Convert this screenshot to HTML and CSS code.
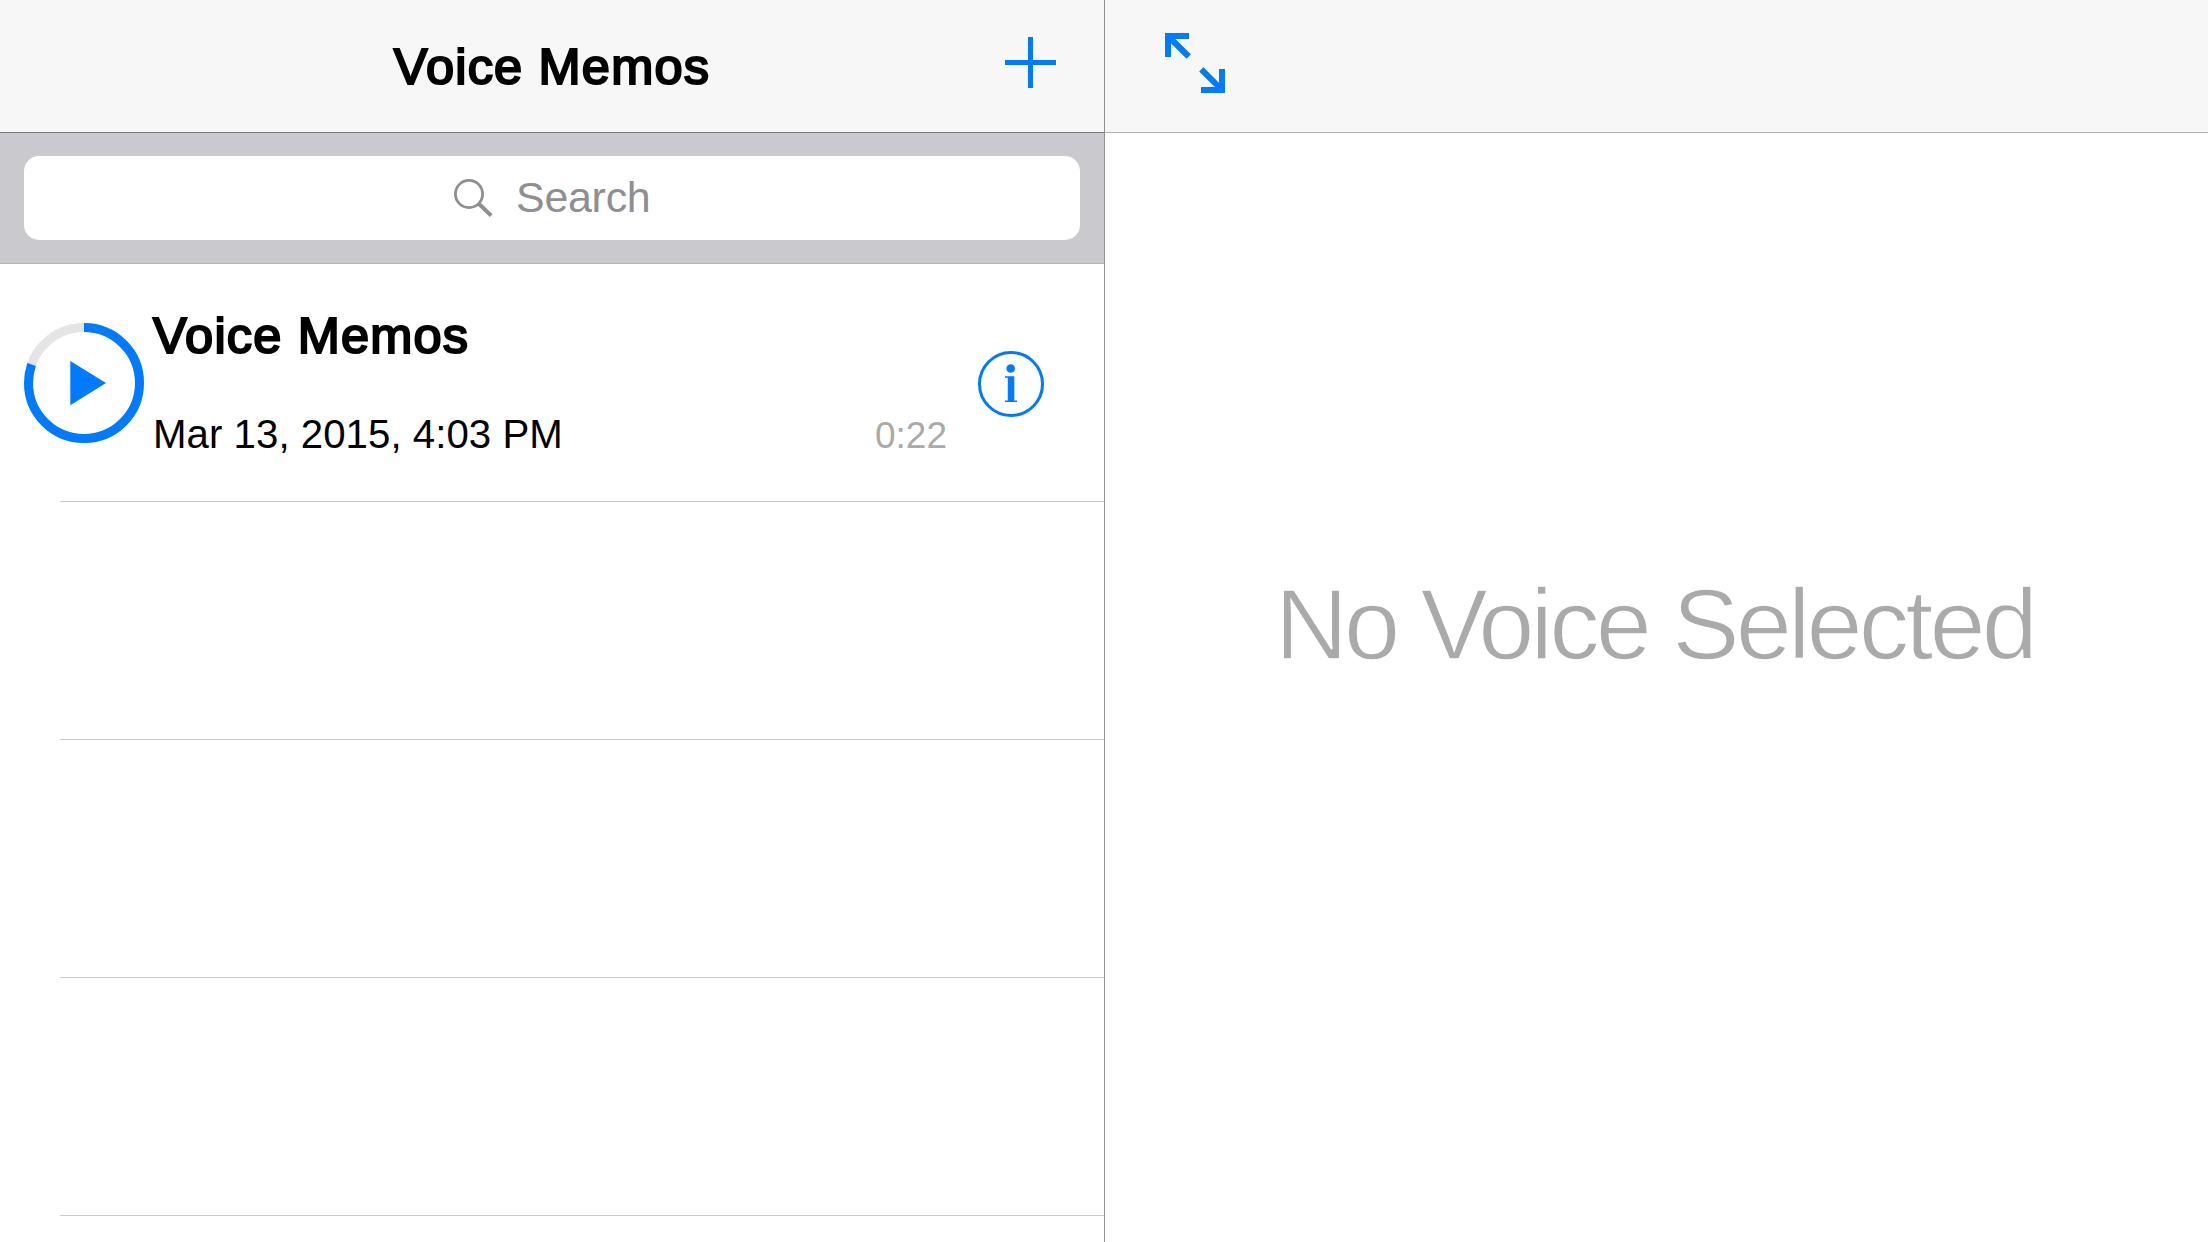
FILE: index.html
```html
<!DOCTYPE html>
<html lang="en">
<head>
<meta charset="utf-8">
<title>Voice Memos</title>
<link rel="stylesheet" href="styles.css">
</head>
<body>
<div class="app">
  <section class="master">
    <header class="bar bar-list">
      <h1 class="medium title">Voice Memos</h1>
      <svg class="add" width="51" height="51" viewBox="0 0 51 51"><path d="M23 0h5v23h23v5H28v23h-5V28H0v-5h23z"/></svg>
    </header>
    <div class="search">
      <div class="field">
        <svg width="40" height="40" viewBox="0 0 40 40"><circle cx="16" cy="16" r="13.6"/><path d="M25.8 25.8L38.2 37.6" class="handle"/></svg>
        <span>Search</span>
      </div>
    </div>
    <ul class="list">
      <li class="row">
        <svg class="play" width="120" height="120" viewBox="0 0 120 120">
          <circle class="track" cx="60" cy="60" r="55.5"/>
          <circle class="progress" cx="60" cy="60" r="55.5" pathLength="100" transform="rotate(-90 60 60)"/>
          <path d="M46.3 38v44.2L82 60z"/>
        </svg>
        <div class="memo">
          <h2 class="medium name">Voice Memos</h2>
          <div class="meta"><span class="date">Mar 13, 2015, 4:03 PM</span><span class="time">0:22</span></div>
        </div>
        <svg class="info" width="66" height="66" viewBox="0 0 66 66">
          <circle class="rim" cx="33" cy="33" r="31.5"/>
          <circle cx="32.7" cy="17.5" r="4.3"/>
          <path d="M27 25.2h9.3v24.3H39V51H27v-1.5h2.8V26.7H27z"/>
        </svg>
      </li>
      <li class="row"></li>
      <li class="row"></li>
      <li class="row"></li>
    </ul>
  </section>
  <section class="detail">
    <header class="bar bar-detail">
      <svg width="60" height="60" viewBox="0 0 60 60"><path d="M0 0h24v6H0zM0 0h6v24H0zM54 36h6v24h-6zM36 54h24v6H36z"/><path class="shaft" d="M4 4L23.7 23.5M36.3 36.3L56 56"/></svg>
    </header>
    <p class="empty">No Voice Selected</p>
  </section>
</div>
</body>
</html>
```
FILE: styles.css
```css
* { box-sizing: border-box; margin: 0; padding: 0; }
body { background: #fff; color: #000; font-family: "Liberation Sans", Arial, sans-serif; }
svg { display: block; flex: none; fill: #007aff; }
.app { display: grid; grid-template-columns: 1105px 1fr; height: 1242px; overflow: hidden; }
.master { display: flex; flex-direction: column; border-right: 1px solid #8e8e93; overflow: hidden; }
.bar { height: 133px; flex: none; background: #f7f7f7; }
.bar-list {
  display: grid; grid-template-columns: 1fr auto 1fr; align-items: start;
  margin-right: -1px; border-right: 1px solid #b2b2b2; border-bottom: 1px solid #7c7c80;
}
.bar-detail { padding: 33px 60px; border-bottom: 1px solid #b2b2b2; }
.medium { font-weight: 400; font-size: 50.5px; line-height: 60px; letter-spacing: 1.2px; white-space: nowrap; -webkit-text-stroke: 2.2px #000; }
.title { grid-column: 2; margin-top: 37px; }
.add { justify-self: end; margin: 37px 48px 0 0; }

.search { height: 131px; flex: none; padding: 23px 24px; background: #c9c9ce; border-bottom: 1px solid #b4b4b9; }
.field {
  display: flex; align-items: flex-start; height: 84px; padding: 22px 0 0 429px; gap: 23px;
  background: #fff; border-radius: 15px; color: #8e8e93; font-size: 43px; letter-spacing: -.3px;
}
.field svg { fill: none; stroke: #8e8e93; stroke-width: 2.8; }
.field .handle { stroke-width: 4; }
.field span { line-height: 50px; margin-top: -6px; }

.list { list-style: none; margin-left: 60px; }
.row { display: flex; height: 238px; border-bottom: 1px solid #c8c7cc; }
.play { margin: 59px 9px 0 -36px; }
.play .track, .play .progress { fill: none; stroke: #e5e5e5; stroke-width: 9; }
.play .progress { stroke: #007aff; stroke-dasharray: 80.4 100; }
.memo { width: 794px; padding-top: 42px; }
.meta { display: flex; justify-content: space-between; align-items: baseline; margin-top: 44px; line-height: 50px; }
.date { font-size: 40.2px; letter-spacing: .05px; }
.time { font-size: 37px; color: #aaa; }
.info { margin: 87px 0 0 31px; }
.info .rim { fill: none; stroke: #007aff; stroke-width: 3; }

.shaft { fill: none; stroke: #007aff; stroke-width: 6; }
/* A background-coloured outline slims the letters to a light weight. */
.empty {
  margin-top: 431px; padding-right: 4px; text-align: center; font-size: 101px; line-height: 120px;
  letter-spacing: -3.9px; color: #aaa; white-space: nowrap; -webkit-text-stroke: 1.5px #fff;
}
```
